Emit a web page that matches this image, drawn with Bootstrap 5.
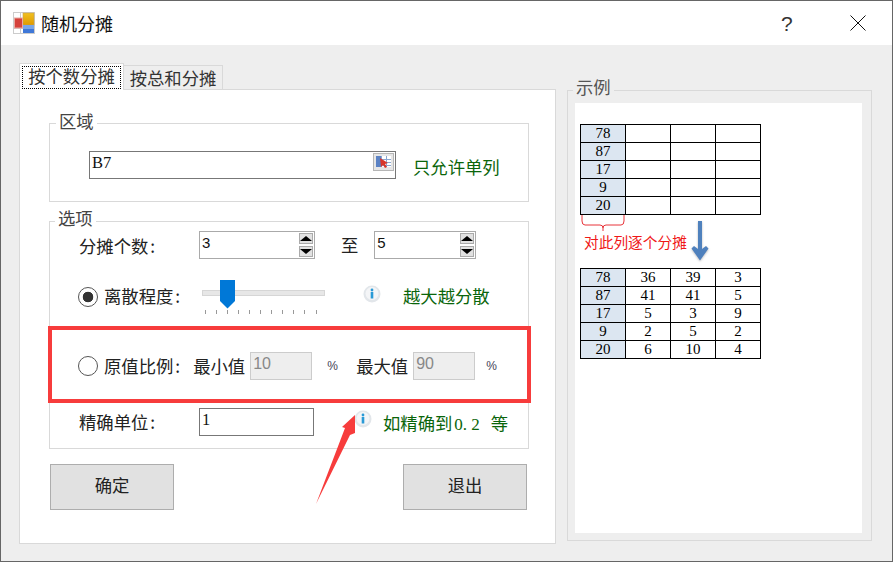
<!DOCTYPE html>
<html lang="zh-CN">
<head>
<meta charset="utf-8">
<title>随机分摊</title>
<link href="https://cdn.jsdelivr.net/npm/bootstrap@5.3.0/dist/css/bootstrap.min.css" rel="stylesheet">
<style>
html,body{margin:0;padding:0;background:#eee;overflow:hidden}
body{font-family:"Noto Sans CJK SC","Liberation Sans",sans-serif;font-size:17.33px;line-height:1;color:#222}
.win{width:893px;height:562px;border:1px solid #666;background:#eee;position:relative;overflow:hidden}
.titlebar{height:44px;background:#fff;padding-left:12px}
.titlebar .ttl{font-size:18px;margin-left:6px;color:#111}
.help{position:absolute;left:780px;top:11px;font:21px "Liberation Sans",sans-serif;color:#333}
.closex{position:absolute;left:849px;top:14px}
.maina{padding:18px 0 0 18px;gap:11px}
.leftcol{width:537px}
.tabs{height:26px;align-items:flex-end}
.tabx{border:1px solid #d9d9d9;font-size:17.33px;color:#333;text-align:center;background:#eee}
.tabon{width:105px;height:27px;background:#fff;border-bottom:0;position:relative;z-index:1;margin-bottom:-1px;padding:2px}
.tabon span{display:block;border:1px dotted #000;height:23px;line-height:18px;white-space:nowrap}
.taboff{width:99px;height:24px;line-height:24px;border-left:0;border-bottom:0}
.panelx{height:455px;width:537px;background:#fff;border:1px solid #d9d9d9;padding:33px 0 0 29px}
.grp{width:480px;border:1px solid #d9d9d9;position:relative}
.grp1{height:79px;padding:27px 0 0 39px}
.grp2{height:228px;margin-top:19px;padding-top:9px}
.lgd{position:absolute;left:6px;top:-13px;background:#fff;padding:0 3px;color:#444;height:20px;line-height:20px}
.txtbox{height:28px;border:1px solid #777;background:#fff;font:16.500px/22px "Liberation Serif",serif;padding:0 0 2px 2px;border-radius:0;color:#111}
.note{color:#0a650a}
.cln{margin-left:2px}
.rw{padding-left:29px}
.r1{height:28px}
.r2{height:36px;margin-top:20px;padding-left:28px;position:relative}
.r3{height:28px;margin-top:37px;padding-left:28px}
.r4{height:28px;margin-top:28px}
.lbl{width:120px}
.spin{height:28px;border:1px solid #aaa;background:#fff;padding:1px;font:15px "Liberation Sans",sans-serif}
.spin .val{padding:1px 0 0 1px;color:#111}
.sp1{width:116px}.sp2{width:102px}
.spbtns{width:14px;gap:2px}
.spb{height:11px;background:#e1e1e1;border:1px solid #aaa;display:flex;align-items:center;justify-content:center}
.up{width:0;height:0;border-left:6px solid transparent;border-right:6px solid transparent;border-bottom:5px solid #000}
.dn{width:0;height:0;border-left:6px solid transparent;border-right:6px solid transparent;border-top:5px solid #000}
.form-check-input.rdo{width:20px;height:20px;margin:0;flex:none;border:1px solid #555;background-color:#fff;background-image:none;opacity:1;float:none}
.form-check-input.rdo:checked{background-image:radial-gradient(circle,#333 0,#333 5px,#fff 5.6px);background-color:#fff;border-color:#555}
.rtxt{margin-left:6px}
.trk{position:absolute;left:152px;top:11px;width:123px;height:6px;background:#e7e7e7;border:1px solid #d6d6d6}
.thumbx{position:absolute;left:170px;top:1px}
.ticks{position:absolute;left:155px;top:31px}
.inf{position:absolute}
.numdis{width:62px;height:28px;background:#eee;border:1px solid #ccc;color:#888;font:16px "Liberation Sans",sans-serif;padding:2px 0 0 2px}
.pct{font:12px "Liberation Sans",sans-serif;color:#445}
.btnx.btn{width:124px;height:46px;background:#e1e1e1;border:1px solid #adadad;border-radius:0;font-size:17.33px;color:#222;padding:0 0 5px}
.btnrow{margin-top:15px;width:477px;margin-left:1px}
.grp3{width:305px;height:451px;border:1px solid #d9d9d9;margin-top:27px;position:relative;padding:12px 9px 7px 7px}
.grp3 .lgd{background:#eee;left:5px;top:-14px;color:#555}
.canvasx{background:#fff;height:430px;padding:21px 0 0 5px}
.tbx.table{width:181px;margin:0;table-layout:fixed;border-collapse:collapse;--bs-table-bg:transparent}
.tbx.table td{height:18px;padding:0;border:1px solid #000;text-align:center;font:15px/16px "Liberation Serif",serif;color:#000}
.tbx.table td.hd{background:#dce6f1}
.midx{display:block;width:181px;height:53px}
.redbox{position:absolute;left:47px;top:325px;width:483px;height:77px;border:4px solid #f73c3c;pointer-events:none}
.redarrow{position:absolute;left:0;top:0;pointer-events:none}
</style>
</head>
<body>
<div class="win">
  <div class="titlebar d-flex align-items-center">
    <svg width="22" height="22" viewBox="0 0 22 22"><defs><linearGradient id="gd" x1="0" y1="0" x2="0" y2="1"><stop offset="0" stop-color="#f0c020"/><stop offset="1" stop-color="#e09a00"/></linearGradient></defs><rect x=".5" y=".5" width="21" height="21" fill="#fff" stroke="#ccc"/><path d="M7.500 0v22M0 16.500h22" stroke="#ccc"/><rect x="10" y="1" width="11" height="12" fill="url(#gd)" stroke="#c9a24a" stroke-width=".6"/><rect x="10" y="13" width="11" height="4" fill="#7aa6e8"/><rect x="10" y="17" width="11" height="4" fill="#3f78d8"/><rect x="1.500" y="6" width="8" height="10" fill="#d6423c" stroke="#e8a8a0"/></svg>
    <span class="ttl">随机分摊</span>
  </div>
  <span class="help">?</span>
  <svg class="closex" width="16" height="16" viewBox="0 0 16 16"><path d="M.5.5l15 15M15.500.5l-15 15" stroke="#111" fill="none"/></svg>

  <div class="maina d-flex">
    <div class="leftcol">
      <div class="tabs d-flex">
        <div class="tabx tabon"><span>按个数分摊</span></div>
        <div class="tabx taboff">按总和分摊</div>
      </div>
      <div class="panelx">
        <div class="grp grp1 d-flex">
          <span class="lgd">区域</span>
          <div class="txtbox d-flex justify-content-between" style="width:307px">
            <span>B7</span>
            <svg style="margin:1px 1px 0 0;flex:none" width="21" height="18" viewBox="0 0 21 18"><rect x=".5" y=".5" width="20" height="17" fill="#e6e6e6" stroke="#b5b5b5"/><rect x="3" y="3" width="15" height="11" fill="#fff"/><path d="M3 6.500h15M3 9.500h15M3 12.500h15M8.500 3v11M13.500 3v11" stroke="#8aa6d0" stroke-width="1"/><rect x="3" y="3" width="5" height="11" fill="#5b82c4"/><path d="M7 5l8 5-3 1 2 3-2 1-2-3-2 2z" fill="#d8352a"/></svg>
          </div>
          <span class="note" style="margin:7px 0 0 17px">只允许单列</span>
        </div>

        <div class="grp grp2">
          <span class="lgd" style="left:5px;top:-14px">选项</span>
          <div class="rw r1 d-flex align-items-center">
            <span class="lbl" style="padding-top:2px">分摊个数<span class="cln">:</span></span>
            <div class="spin sp1 d-flex justify-content-between"><span class="val">3</span>
              <div class="spbtns d-flex flex-column"><div class="spb"><i class="up"></i></div><div class="spb"><i class="dn"></i></div></div></div>
            <span style="margin:0 16px 0 26px">至</span>
            <div class="spin sp2 d-flex justify-content-between"><span class="val">5</span>
              <div class="spbtns d-flex flex-column"><div class="spb"><i class="up"></i></div><div class="spb"><i class="dn"></i></div></div></div>
          </div>

          <div class="r2 d-flex align-items-center">
            <input class="form-check-input rdo" type="radio" name="m" checked>
            <span class="rtxt" style="padding-bottom:2px">离散程度<span class="cln">:</span></span>
            <div class="trk"></div>
            <svg class="thumbx" width="15" height="29" viewBox="0 0 15 29"><path d="M0 0h15v21l-7.500 7.500L0 21z" fill="#0078d7"/></svg>
            <svg class="ticks" width="114" height="5" viewBox="0 0 114 5"><path d="M.5 0v4M11.500 0v4M22.500 0v4M33.500 0v4M44.500 0v4M55.500 0v4M66.500 0v4M77.500 0v4M88.500 0v4M99.500 0v4M111.500 0v4" stroke="#999"/></svg>
            <svg class="inf" style="left:313px;top:6px" width="18" height="18" viewBox="0 0 18 18"><circle cx="9" cy="9" r="8.500" fill="#e2e6ea"/><circle cx="9" cy="8.500" r="6.500" fill="#f4f5f7"/><circle cx="9" cy="5" r="1.400" fill="#2a9ad6"/><rect x="7.700" y="7" width="2.600" height="6.500" fill="#2a9ad6"/></svg>
            <span class="note" style="position:absolute;left:353px;top:8px">越大越分散</span>
          </div>

          <div class="r3 d-flex align-items-center">
            <input class="form-check-input rdo" type="radio" name="m">
            <span class="rtxt">原值比例<span class="cln">:</span></span>
            <span style="margin-left:13px;margin-right:6px;white-space:nowrap;width:51px">最小值</span>
            <div class="numdis">10</div>
            <span class="pct" style="margin-left:15px;width:29px">%</span>
            <span style="width:57px;white-space:nowrap">最大值</span>
            <div class="numdis">90</div>
            <span class="pct" style="margin-left:11px">%</span>
          </div>

          <div class="rw r4 d-flex align-items-center position-relative">
            <span class="lbl">精确单位<span class="cln">:</span></span>
            <div class="txtbox" style="width:115px">1</div>
            <svg class="inf" style="left:304px;top:2px" width="18" height="18" viewBox="0 0 18 18"><circle cx="9" cy="9" r="8.500" fill="#e2e6ea"/><circle cx="9" cy="8.500" r="6.500" fill="#f4f5f7"/><circle cx="9" cy="5" r="1.400" fill="#2a9ad6"/><rect x="7.700" y="7" width="2.600" height="6.500" fill="#2a9ad6"/></svg>
            <span class="note" style="position:absolute;left:333px;top:6px;white-space:nowrap">如精确到<span style="font:17px 'Liberation Serif',serif;margin:0 11px 0 2px">0. 2</span>等</span>
          </div>
        </div>

        <div class="btnrow d-flex justify-content-between">
          <button type="button" class="btn btnx">确定</button>
          <button type="button" class="btn btnx">退出</button>
        </div>
      </div>
    </div>

    <div class="grp3">
      <span class="lgd">示例</span>
      <div class="canvasx">
        <table class="table tbx"><tbody>
          <tr><td class="hd">78</td><td></td><td></td><td></td></tr>
          <tr><td class="hd">87</td><td></td><td></td><td></td></tr>
          <tr><td class="hd">17</td><td></td><td></td><td></td></tr>
          <tr><td class="hd">9</td><td></td><td></td><td></td></tr>
          <tr><td class="hd">20</td><td></td><td></td><td></td></tr>
        </tbody></table>
        <svg class="midx" viewBox="0 0 181 53">
          <defs><filter id="sh" x="-30%" y="-10%" width="160%" height="120%"><feDropShadow dx="0" dy="1" stdDeviation="0.800" flood-color="#777" flood-opacity=".5"/></filter></defs>
          <path d="M2 0v6q0 4 3 4h15q3 0 3 3q0-3 3-3h15q3 0 3-4V0M23 13v3" fill="none" stroke="#e8343a"/>
          <text x="4" y="33" font-size="14.700" fill="#f01818" font-family="Noto Sans CJK SC">对此列逐个分摊</text>
          <path d="M118 6h4v28l4-3 2.500 2.500-8.500 12-8.500-12 2.500-2.500 4 3z" fill="#4f81bd" filter="url(#sh)"/>
        </svg>
        <table class="table tbx"><tbody>
          <tr><td class="hd">78</td><td>36</td><td>39</td><td>3</td></tr>
          <tr><td class="hd">87</td><td>41</td><td>41</td><td>5</td></tr>
          <tr><td class="hd">17</td><td>5</td><td>3</td><td>9</td></tr>
          <tr><td class="hd">9</td><td>2</td><td>5</td><td>2</td></tr>
          <tr><td class="hd">20</td><td>6</td><td>10</td><td>4</td></tr>
        </tbody></table>
      </div>
    </div>
  </div>

  <div class="redbox"></div>
  <svg class="redarrow" width="893" height="562" viewBox="0 0 893 562"><polygon points="354,414 341,426 344,427 315,503 349,434 354,432" fill="#f73c3c"/></svg>
</div>
<script src="https://cdn.jsdelivr.net/npm/bootstrap@5.3.0/dist/js/bootstrap.bundle.min.js"></script>
</body>
</html>
